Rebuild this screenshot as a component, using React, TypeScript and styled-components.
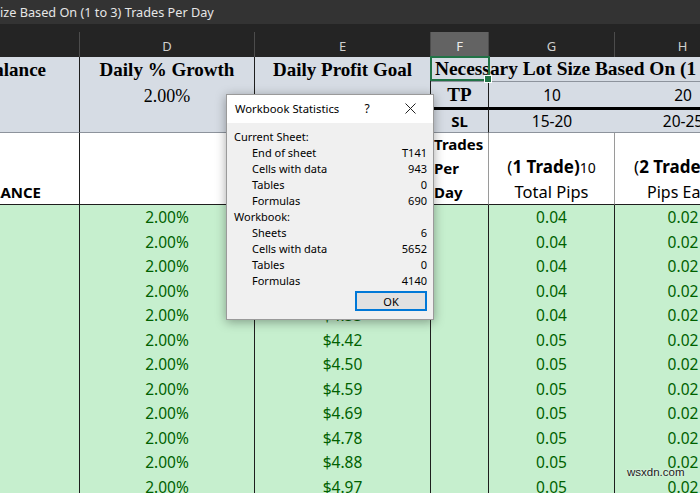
import styled, { createGlobalStyle } from "styled-components"

const GlobalStyle = createGlobalStyle`
  html, body {
    margin: 0;
    padding: 0;
    background: #c6efce;
  }
  * {
    box-sizing: border-box;
  }
`

const LINE = "1px solid #1e1e1e"
const SOFT = "1px solid #8d939c"

const Screen = styled.div`
  position: relative;
  width: 700px;
  height: 493px;
  overflow: hidden;
  background: #c6efce;
`

const TitleBar = styled.div`
  height: 24px;
  display: flex;
  align-items: center;
  background: #333333;
  color: #e6e6e6;
  font: 12.7px "Noto Sans", sans-serif;
  white-space: nowrap;
`

const ToolStrip = styled.div`
  height: 8px;
  background: #242424;
`

const Sheet = styled.div`
  display: grid;
  grid-template-columns: 80px 175px 176px 58px 126px 136px;
  grid-template-rows: 25px 25px 25px 26px 72px repeat(12, 24.5px);
  width: 751px;
`

const ColLetter = styled.div<{ $active?: boolean }>`
  display: flex;
  align-items: center;
  justify-content: center;
  padding-top: 2px;
  background: ${p => (p.$active ? "#636363" : "#242424")};
  border-right: 1px solid #4c4c4c;
  color: ${p => (p.$active ? "#ececec" : "#cfcfcf")};
  font: 13px "Noto Sans", sans-serif;
`

const HeadCell = styled.div<{
  $justify?: string
  $padLeft?: number
  $padRight?: number
  $padTop?: number
  $right?: boolean
  $bottom?: string
  $top?: string
  $front?: boolean
}>`
  position: relative;
  z-index: ${p => (p.$front ? 2 : 0)};
  display: flex;
  align-items: center;
  justify-content: ${p => p.$justify ?? "center"};
  padding-left: ${p => p.$padLeft ?? 0}px;
  padding-right: ${p => p.$padRight ?? 0}px;
  padding-top: ${p => p.$padTop ?? 0}px;
  background: #d6dce4;
  border-right: ${p => (p.$right ? LINE : "none")};
  border-bottom: ${p => p.$bottom ?? "none"};
  border-top: ${p => p.$top ?? "none"};
  white-space: nowrap;
  overflow: visible;
  color: #000;
`

const LabelCell = styled.div<{ $justify?: string; $padLeft?: number; $padRight?: number; $right?: string }>`
  display: flex;
  flex-direction: column;
  justify-content: flex-end;
  align-items: ${p => p.$justify ?? "center"};
  padding-left: ${p => p.$padLeft ?? 0}px;
  padding-right: ${p => p.$padRight ?? 0}px;
  background: #ffffff;
  border-right: ${p => p.$right ?? LINE};
  border-bottom: ${LINE};
  white-space: nowrap;
  overflow: hidden;
  color: #000;
`

const DataCell = styled.div<{ $right?: boolean }>`
  display: flex;
  align-items: center;
  justify-content: center;
  background: #c6efce;
  border-right: ${p => (p.$right ? LINE : "none")};
  color: #006100;
  font: 15.5px "Noto Sans", sans-serif;
  white-space: nowrap;
`

const SerifTitle = styled.span<{ $bold?: boolean; $size?: number }>`
  font-family: "Liberation Serif", serif;
  font-weight: ${p => (p.$bold === false ? 400 : 700)};
  font-size: ${p => p.$size ?? 19}px;
`

const SansText = styled.span<{ $bold?: boolean; $size?: number }>`
  font-family: "Noto Sans", sans-serif;
  font-weight: ${p => (p.$bold ? 700 : 400)};
  font-size: ${p => p.$size ?? 15.5}px;
  line-height: 24px;
`

const Selection = styled.div`
  position: absolute;
  inset: -1px -1px 0 -1px;
  border: 2px solid #217346;
  pointer-events: none;

  &::after {
    content: "";
    position: absolute;
    right: -4px;
    bottom: -4px;
    width: 6px;
    height: 6px;
    background: #217346;
    border: 1px solid #ffffff;
  }
`

const Dialog = styled.div`
  position: absolute;
  left: 226px;
  top: 94px;
  width: 208px;
  height: 226px;
  display: flex;
  flex-direction: column;
  background: #f0f0f0;
  border: 1px solid #9a9a9a;
  box-shadow: 0 2px 10px rgba(0, 0, 0, 0.35);
  font: 11px "Noto Sans", sans-serif;
  color: #000;
`

const DialogTitle = styled.div`
  height: 29px;
  display: flex;
  align-items: center;
  padding-left: 8px;
  padding-bottom: 2px;
  background: #ffffff;
  font-size: 11.3px;
`

const TitleText = styled.span`
  flex: 1;
`

const Help = styled.span`
  width: 24px;
  margin-right: 16px;
  text-align: center;
  font-size: 12px;
`

const CloseBox = styled.span`
  width: 30px;
  display: flex;
  justify-content: center;
  margin-right: 8px;
`

const DialogBody = styled.div`
  flex: 1;
  display: flex;
  flex-direction: column;
  padding: 5px 6px 8px 7px;
`

const StatRow = styled.div<{ $indent?: boolean }>`
  height: 16px;
  display: flex;
  align-items: center;
  justify-content: space-between;
  padding-left: ${p => (p.$indent ? 18 : 0)}px;
`

const ButtonRow = styled.div`
  display: flex;
  justify-content: flex-end;
  margin-top: 3px;
`

const OkButton = styled.button`
  width: 72px;
  height: 20px;
  padding: 0;
  background: #e1e1e1;
  border: 1px solid #0078d7;
  box-shadow: inset 0 0 0 1px #0078d7;
  font: 11px "Noto Sans", sans-serif;
  color: #000;
`

const Watermark = styled.div`
  position: absolute;
  left: 627px;
  top: 466px;
  font: 11.5px "Liberation Sans", Arial, sans-serif;
  color: #1a1a1a;
  text-shadow: 0 0 2px #ffffff;
`

const profit = ["$4.08", "$4.16", "$4.24", "$4.33", "$4.33", "$4.42", "$4.50", "$4.59", "$4.69", "$4.78", "$4.88", "$4.97"]

const currentSheet: [string, string][] = [
  ["End of sheet", "T141"],
  ["Cells with data", "943"],
  ["Tables", "0"],
  ["Formulas", "690"],
]

const workbook: [string, string][] = [
  ["Sheets", "6"],
  ["Cells with data", "5652"],
  ["Tables", "0"],
  ["Formulas", "4140"],
]

export default function App() {
  const thick = "3px solid #000"
  return (
    <Screen>
      <GlobalStyle />
      <TitleBar>ize Based On (1 to 3) Trades Per Day</TitleBar>
      <ToolStrip />
      <Sheet>
        <ColLetter />
        <ColLetter>D</ColLetter>
        <ColLetter>E</ColLetter>
        <ColLetter $active>F</ColLetter>
        <ColLetter>G</ColLetter>
        <ColLetter>H</ColLetter>

        <HeadCell $justify="flex-end" $padRight={33} $right>
          <SerifTitle>Balance</SerifTitle>
        </HeadCell>
        <HeadCell $right>
          <SerifTitle>Daily % Growth</SerifTitle>
        </HeadCell>
        <HeadCell $right>
          <SerifTitle>Daily Profit Goal</SerifTitle>
        </HeadCell>
        <HeadCell $justify="flex-start" $padLeft={4} $front $bottom={SOFT}>
          <SerifTitle $size={19.4}>Necessary Lot Size Based On (1 to 3) Trades Per Day</SerifTitle>
          <Selection />
        </HeadCell>
        <HeadCell $bottom={SOFT} />
        <HeadCell $bottom={SOFT} />

        <HeadCell $right />
        <HeadCell $right $padTop={3}>
          <SerifTitle $bold={false} $size={18}>2.00%</SerifTitle>
        </HeadCell>
        <HeadCell $right />
        <HeadCell $right>
          <SerifTitle>TP</SerifTitle>
        </HeadCell>
        <HeadCell>
          <SansText>10</SansText>
        </HeadCell>
        <HeadCell>
          <SansText>20</SansText>
        </HeadCell>

        <HeadCell $right $bottom={SOFT} />
        <HeadCell $right $bottom={SOFT} />
        <HeadCell $right $bottom={SOFT} />
        <HeadCell $right $top={thick} $bottom={SOFT}>
          <SansText $bold $size={15}>SL</SansText>
        </HeadCell>
        <HeadCell $top={thick} $bottom={SOFT}>
          <SansText>15-20</SansText>
        </HeadCell>
        <HeadCell $top={thick} $bottom={SOFT}>
          <SansText>20-25</SansText>
        </HeadCell>

        <LabelCell $justify="flex-end" $padRight={38}>
          <SansText $bold $size={15}>BALANCE</SansText>
        </LabelCell>
        <LabelCell />
        <LabelCell />
        <LabelCell $justify="flex-start" $padLeft={3} $right="1px solid #9a9a9a">
          <SansText $bold $size={15}>Trades</SansText>
          <SansText $bold $size={15}>Per</SansText>
          <SansText $bold $size={15}>Day</SansText>
        </LabelCell>
        <LabelCell $right="1px solid #9a9a9a">
          <SansText $size={17}>
            (<b>1 Trade)</b>
            <SansText $size={14}>10</SansText>
          </SansText>
          <SansText $size={16.5}>Total Pips</SansText>
        </LabelCell>
        <LabelCell $right="1px solid #9a9a9a">
          <SansText $size={17}>
            (<b>2 Trades)</b>
            <SansText $size={14}>20</SansText>
          </SansText>
          <SansText $size={16}>Pips Each</SansText>
        </LabelCell>

        {profit.map((value, i) => (
          <Row key={i} profit={value} total={i < 5 ? "0.04" : "0.05"} />
        ))}
      </Sheet>

      <Dialog>
        <DialogTitle>
          <TitleText>Workbook Statistics</TitleText>
          <Help>?</Help>
          <CloseBox>
            <svg width="11" height="11" viewBox="0 0 11 11">
              <path d="M0.5 0.5 L10.5 10.5 M10.5 0.5 L0.5 10.5" stroke="#222" strokeWidth="1" fill="none" />
            </svg>
          </CloseBox>
        </DialogTitle>
        <DialogBody>
          <StatRow>Current Sheet:</StatRow>
          {currentSheet.map(([label, value]) => (
            <StatRow key={"c" + label} $indent>
              <span>{label}</span>
              <span>{value}</span>
            </StatRow>
          ))}
          <StatRow>Workbook:</StatRow>
          {workbook.map(([label, value]) => (
            <StatRow key={"w" + label} $indent>
              <span>{label}</span>
              <span>{value}</span>
            </StatRow>
          ))}
          <ButtonRow>
            <OkButton>OK</OkButton>
          </ButtonRow>
        </DialogBody>
      </Dialog>

      <Watermark>wsxdn.com</Watermark>
    </Screen>
  )
}

function Row({ profit, total }: { profit: string; total: string }) {
  return (
    <>
      <DataCell $right />
      <DataCell $right>2.00%</DataCell>
      <DataCell $right>{profit}</DataCell>
      <DataCell $right />
      <DataCell $right>{total}</DataCell>
      <DataCell>0.02</DataCell>
    </>
  )
}
